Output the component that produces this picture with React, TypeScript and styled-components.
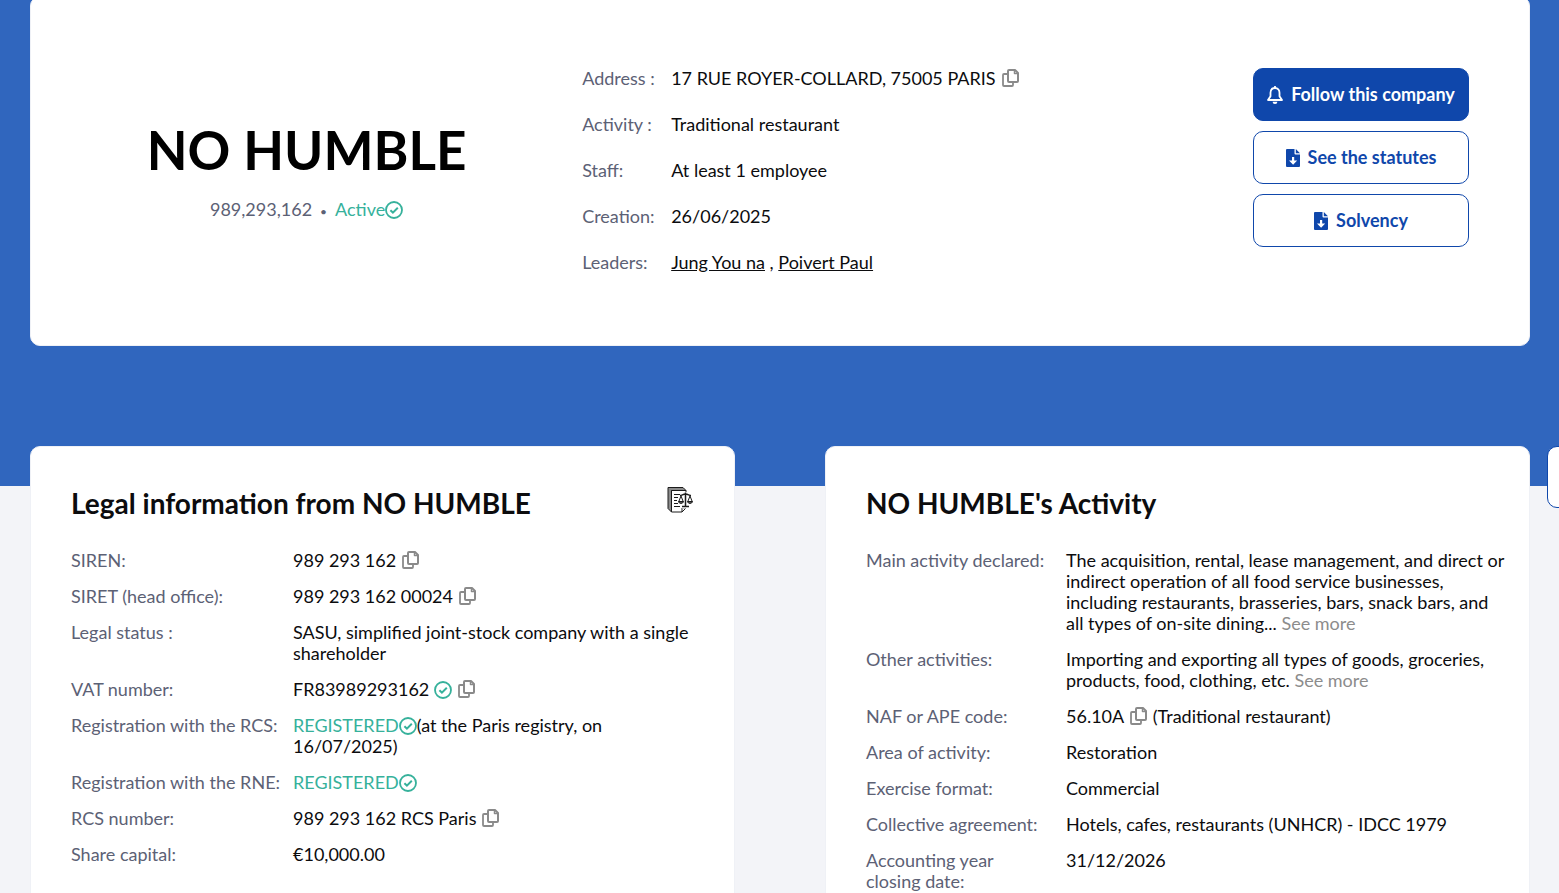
import React from "react";
import styled, { createGlobalStyle } from "styled-components";

const GlobalStyle = createGlobalStyle`
  *, *::before, *::after { box-sizing: border-box; }
  body {
    margin: 0;
    background: #f3f4f8;
    color: #0c0c0e;
    font-family: Lato, "Liberation Sans", sans-serif;
    font-size: 18px;
    line-height: 21px;
  }
`;

const Page = styled.main`
  position: relative;
  height: 100vh;
  overflow: hidden;
`;

const Hero = styled.section`
  background: #3066be;
  padding: 0 29px 140px 30px;
`;

const Card = styled.section`
  background: #fff;
  border: 1px solid #eff1f6;
  border-radius: 10px;
`;

const CompanyCard = styled(Card)`
  display: grid;
  grid-template-columns: 12fr 17fr 216px;
  gap: 60px;
  margin-top: -4px;
  padding: 71px 60px 72px;
`;

const Identity = styled.div`
  align-self: center;
  padding-bottom: 2px;
  text-align: center;
`;

const CompanyName = styled.h1`
  margin: 0 0 17px;
  color: #000;
  font-size: 53px;
  line-height: 64px;
  font-weight: 700;
`;

const Muted = styled.span`
  color: #5c6175;
`;

const Bullet = styled(Muted)`
  margin: 0 8px;
  font-size: 12px;
`;

const Valid = styled.span`
  color: #36b19b;
`;

const Facts = styled.dl<{ $labels: number; $gap: number; $inset?: number }>`
  display: grid;
  grid-template-columns: ${(p) => p.$labels}px 1fr;
  align-content: start;
  row-gap: ${(p) => p.$gap}px;
  margin: 0;

  dt {
    padding-right: ${(p) => p.$inset ?? 8}px;
  }
`;

const Label = styled.dt`
  color: #5c6175;
`;

const Value = styled.dd`
  margin: 0;
  color: #0c0c0e;
`;

const TextLink = styled.a`
  color: inherit;
  text-decoration: underline;
`;

const MoreLink = styled.a`
  color: #8c8c8c;
  text-decoration: none;
`;

const Actions = styled.div`
  display: flex;
  flex-direction: column;
  gap: 10px;
`;

const ActionButton = styled.button<{ $primary?: boolean }>`
  display: flex;
  align-items: center;
  justify-content: center;
  gap: 8px;
  height: 53px;
  padding: 0;
  border: 1px solid #0f47ab;
  border-radius: 10px;
  background: ${(p) => (p.$primary ? "#0f47ab" : "#fff")};
  color: ${(p) => (p.$primary ? "#fff" : "#0f47ab")};
  font: inherit;
  font-weight: 700;
  white-space: nowrap;
  cursor: pointer;
`;

const Columns = styled.div`
  display: grid;
  grid-template-columns: 1fr 1fr;
  gap: 90px;
  margin-top: -40px;
  padding: 0 29px 40px 30px;
`;

const InfoCard = styled(Card)`
  padding: 39px 20px 40px 40px;
`;

const CardHeader = styled.header`
  display: flex;
  align-items: flex-start;
  justify-content: space-between;
  margin-bottom: 30px;
  padding-right: 21px;
`;

const CardTitle = styled.h2`
  margin: 0;
  font-size: 28px;
  line-height: 34px;
  font-weight: 700;
`;

const CopyButton = styled.button`
  display: inline-flex;
  margin: 0 0 0 6px;
  padding: 0;
  border: 0;
  background: none;
  color: #8a8a8a;
  vertical-align: -2px;
  cursor: pointer;
`;

const InlineCheck = styled.svg`
  vertical-align: -3px;
`;

const SideTab = styled.button`
  position: absolute;
  top: 446px;
  right: -40px;
  width: 52px;
  height: 62px;
  border: 1px solid #0f47ab;
  border-radius: 10px;
  background: #fff;
`;

function Copy() {
  return (
    <CopyButton type="button" aria-label="Copy">
      <svg width="18" height="18" viewBox="0 0 18 18" fill="none" stroke="currentColor" strokeWidth="2" strokeLinejoin="round">
        <path d="M7 1h6l3 3v8a1 1 0 0 1-1 1H7a1 1 0 0 1-1-1V2a1 1 0 0 1 1-1Z" />
        <path d="M12.500 1v3.500H16" strokeWidth="1.500" />
        <path d="M5.500 5H2a1 1 0 0 0-1 1v10a1 1 0 0 0 1 1h8a1 1 0 0 0 1-1v-2.500" strokeWidth="1.800" />
      </svg>
    </CopyButton>
  );
}

function Check() {
  return (
    <InlineCheck width="18" height="18" viewBox="0 0 18 18" fill="none" stroke="#36b19b" strokeWidth="1.8">
      <circle cx="9" cy="9" r="8" />
      <path d="m5.400 9.300 2.500 2.300 4.900-4.800" strokeWidth="2" />
    </InlineCheck>
  );
}

function Bell() {
  return (
    <svg width="16" height="18" viewBox="0 0 16 18" fill="none" stroke="currentColor" strokeWidth="1.8" strokeLinejoin="round">
      <path d="M8 2C5.200 2 3.500 4 3.500 6.800v3.400L1 14h14l-2.500-3.800V6.800C12.500 4 10.800 2 8 2Z" />
      <path d="M8 0v2" />
      <path d="M5.600 15.800h4.800A2.400 2.200 0 0 1 8 18a2.400 2.200 0 0 1-2.400-2.200Z" fill="currentColor" stroke="none" />
    </svg>
  );
}

function FileDownload() {
  return (
    <svg width="14" height="18" viewBox="0 0 14 18">
      <path
        fill="currentColor"
        fillRule="evenodd"
        d="M1 0h7.500v4.600a1 1 0 0 0 1 1H14V17a1 1 0 0 1-1 1H1a1 1 0 0 1-1-1V1a1 1 0 0 1 1-1Zm5 8v3.600H3L7.100 15.800 11.200 11.600H8.200V8Z"
      />
      <path fill="currentColor" d="M9.800 0 14 4.300H9.800Z" />
    </svg>
  );
}

function LegalDocument() {
  return (
    <svg width="26" height="28" viewBox="0 0 26 28" fill="none" stroke="#1c1c1c" strokeWidth="1">
      <path d="M1 1.500h15l3 3H4.500v21.500L1 22.500Z" fill="#8b8b8b" />
      <path d="M4.500 4.500H19V22l-4 4H4.500Z" fill="#fff" />
      <path d="M15 26v-4h4" />
      <path d="M7 8.500h6M7 11.500h4M7 14.500h3M7 17.500h4M7 20.500h6" />
      <path d="M18.500 6v14M15 20.500h7" stroke="#fff" strokeWidth="4" />
      <path d="M18.500 6.500v14M15 20.500h7M13 9.500c2 0 3-1.500 5.500-1.500s3.500 1.500 5.500 1.500" strokeWidth="1.500" />
      <path d="m14 10-2.200 5.500h4.400ZM23 10l-2.200 5.500h4.400Z" fill="#fff" />
      <path d="M11.500 15.500c.4 2.600 4.600 2.600 5 0ZM20.500 15.500c.4 2.600 4.600 2.600 5 0Z" fill="#555" />
    </svg>
  );
}

function Fact({ label, children }: { label: string; children: React.ReactNode }) {
  return (
    <>
      <Label>{label}</Label>
      <Value>{children}</Value>
    </>
  );
}

export default function App() {
  return (
    <>
      <GlobalStyle />
      <Page>
        <Hero>
          <CompanyCard>
            <Identity>
              <CompanyName>NO HUMBLE</CompanyName>
              <Muted>989,293,162</Muted>
              <Bullet>•</Bullet>
              <Valid>Active</Valid>
              <Check />
            </Identity>
            <Facts $labels={89} $gap={25}>
              <Fact label="Address :">17 RUE ROYER-COLLARD, 75005 PARIS<Copy /></Fact>
              <Fact label="Activity :">Traditional restaurant</Fact>
              <Fact label="Staff:">At least 1 employee</Fact>
              <Fact label="Creation:">26/06/2025</Fact>
              <Fact label="Leaders:">
                <TextLink href="#jung">Jung You na</TextLink> , <TextLink href="#poivert">Poivert Paul</TextLink>
              </Fact>
            </Facts>
            <Actions>
              <ActionButton type="button" $primary><Bell />Follow this company</ActionButton>
              <ActionButton type="button"><FileDownload />See the statutes</ActionButton>
              <ActionButton type="button"><FileDownload />Solvency</ActionButton>
            </Actions>
          </CompanyCard>
        </Hero>
        <Columns>
          <InfoCard>
            <CardHeader>
              <CardTitle>Legal information from NO HUMBLE</CardTitle>
              <LegalDocument />
            </CardHeader>
            <Facts $labels={222} $gap={15}>
              <Fact label="SIREN:">989 293 162<Copy /></Fact>
              <Fact label="SIRET (head office):">989 293 162 00024<Copy /></Fact>
              <Fact label="Legal status :">SASU, simplified joint-stock company with a single shareholder</Fact>
              <Fact label="VAT number:">FR83989293162 <Check /><Copy /></Fact>
              <Fact label="Registration with the RCS:">
                <Valid>REGISTERED</Valid><Check />(at the Paris registry, on<br />16/07/2025)
              </Fact>
              <Fact label="Registration with the RNE:"><Valid>REGISTERED</Valid><Check /></Fact>
              <Fact label="RCS number:">989 293 162 RCS Paris<Copy /></Fact>
              <Fact label="Share capital:">€10,000.00</Fact>
            </Facts>
          </InfoCard>
          <InfoCard>
            <CardHeader>
              <CardTitle>NO HUMBLE's Activity</CardTitle>
            </CardHeader>
            <Facts $labels={200} $gap={15} $inset={18}>
              <Fact label="Main activity declared:">
                The acquisition, rental, lease management, and direct or indirect operation of all food service
                businesses, including restaurants, brasseries, bars, snack bars, and all types of on-site dining...{" "}
                <MoreLink href="#activity">See more</MoreLink>
              </Fact>
              <Fact label="Other activities:">
                Importing and exporting all types of goods, groceries, products, food, clothing, etc.{" "}
                <MoreLink href="#others">See more</MoreLink>
              </Fact>
              <Fact label="NAF or APE code:">56.10A<Copy /> (Traditional restaurant)</Fact>
              <Fact label="Area of activity:">Restoration</Fact>
              <Fact label="Exercise format:">Commercial</Fact>
              <Fact label="Collective agreement:">Hotels, cafes, restaurants (UNHCR) - IDCC 1979</Fact>
              <Fact label="Accounting year closing date:">31/12/2026</Fact>
            </Facts>
          </InfoCard>
        </Columns>
        <SideTab type="button" aria-label="Open side panel" />
      </Page>
    </>
  );
}
